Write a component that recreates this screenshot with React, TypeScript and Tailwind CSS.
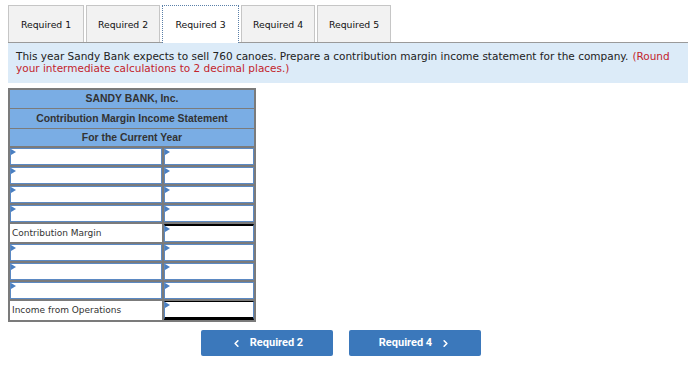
import { ChevronLeft, ChevronRight } from 'lucide-react';

const tabs = [
    { label: 'Required 1', w: 'w-[76px]' },
    { label: 'Required 2', w: 'w-[74px]' },
    { label: 'Required 3', w: 'w-[77px]', active: true },
    { label: 'Required 4', w: 'w-[74px]' },
    { label: 'Required 5', w: 'w-[74px]' },
];

// small blue marker shown on the editable cells
const Marker = () => (
    <span className="absolute left-0 top-0 w-0 h-0 border-y-[3px] border-y-transparent border-l-[5px] border-l-[#4a7fc1]" />
);

const InputCell = ({ extra = '' }: { extra?: string }) => (
    <div className={`relative h-full bg-white border border-[#5b89c3] ${extra}`}>
        <Marker />
    </div>
);

const Row = ({ label, rightExtra = '', h = 'h-[19px]' }: { label?: string; rightExtra?: string; h?: string }) => (
    <div className={`flex ${h}`}>
        <div className="w-[154px] border border-[#7b7b7b]">
            {label ? (
                <div className="h-full flex items-center pl-[2px] pt-[1px] text-[9px] text-[#333]">{label}</div>
            ) : (
                <InputCell />
            )}
        </div>
        <div className="flex-1 border border-[#7b7b7b]">
            <InputCell extra={rightExtra} />
        </div>
    </div>
);

const App: React.FC = () => {
    return (
        <div className="w-[699px] h-[369px] bg-white pl-[8px] pt-[5px] font-['DejaVu_Sans',Verdana,sans-serif]">
            {/* Tabs */}
            <div className="flex gap-[2px] w-[680px] border-b border-[#9a9a9a] h-[38px]">
                {tabs.map((t) => (
                    <div
                        key={t.label}
                        className={
                            t.active
                                ? `${t.w} h-[38px] -mb-px bg-white border border-dotted border-b-0 border-[#5a7fa8] flex items-center justify-center pt-[1px] text-[9.3px] text-[#111]`
                                : `${t.w} h-[37px] bg-[#f2f2f2] border border-b-0 border-[#c6c6c6] flex items-center justify-center pt-[2px] text-[9.3px] text-[#111]`
                        }
                    >
                        {t.label}
                    </div>
                ))}
            </div>

            {/* Instructions */}
            <div className="w-[680px] h-[40px] bg-[#dcebf8] px-[8px] pt-[7px] text-[10.5px] leading-[12px] text-[#222]">
                <div className="flex gap-[4px] whitespace-nowrap">
                    <span>This year Sandy Bank expects to sell 760 canoes. Prepare a contribution margin income statement for the company.</span>
                    <span className="text-[#c3242c]">(Round</span>
                </div>
                <div className="text-[#c3242c]">your intermediate calculations to 2 decimal places.)</div>
            </div>

            {/* Statement */}
            <div className="mt-[5px] w-[248px] border border-[#7b7b7b]">
                <div className="bg-[#7aade4] border border-[#7b7b7b] font-['Liberation_Sans',Arial,sans-serif] font-bold text-[10.4px] text-[#333]">
                    <div className="h-[18px] flex items-center justify-center">SANDY BANK, Inc.</div>
                    <div className="h-[20px] flex items-center justify-center border-t border-[#7b7b7b]">Contribution Margin Income Statement</div>
                    <div className="h-[18px] flex items-center justify-center border-t border-[#7b7b7b]">For the Current Year</div>
                </div>
                <Row />
                <Row />
                <Row />
                <Row />
                <Row label="Contribution Margin" h="h-[20px]" rightExtra="border-t-2 border-t-black" />
                <Row />
                <Row />
                <Row />
                <Row label="Income from Operations" h="h-[21px]" rightExtra="border-t-black border-b-[3px] border-b-black" />
            </div>

            {/* Navigation */}
            <div className="flex gap-[16px] ml-[193px] mt-[8px] font-['Roboto',Arial,sans-serif] font-bold text-[11px] text-white">
                <button className="w-[132px] h-[26px] bg-[#3b78bb] rounded-[2px] flex items-center justify-center gap-[8px]">
                    <ChevronLeft size={11} strokeWidth={3.5} />
                    Required 2
                </button>
                <button className="w-[132px] h-[26px] bg-[#3b78bb] rounded-[2px] flex items-center justify-center gap-[8px]">
                    Required 4
                    <ChevronRight size={11} strokeWidth={3.5} />
                </button>
            </div>
        </div>
    );
};

export default App;
